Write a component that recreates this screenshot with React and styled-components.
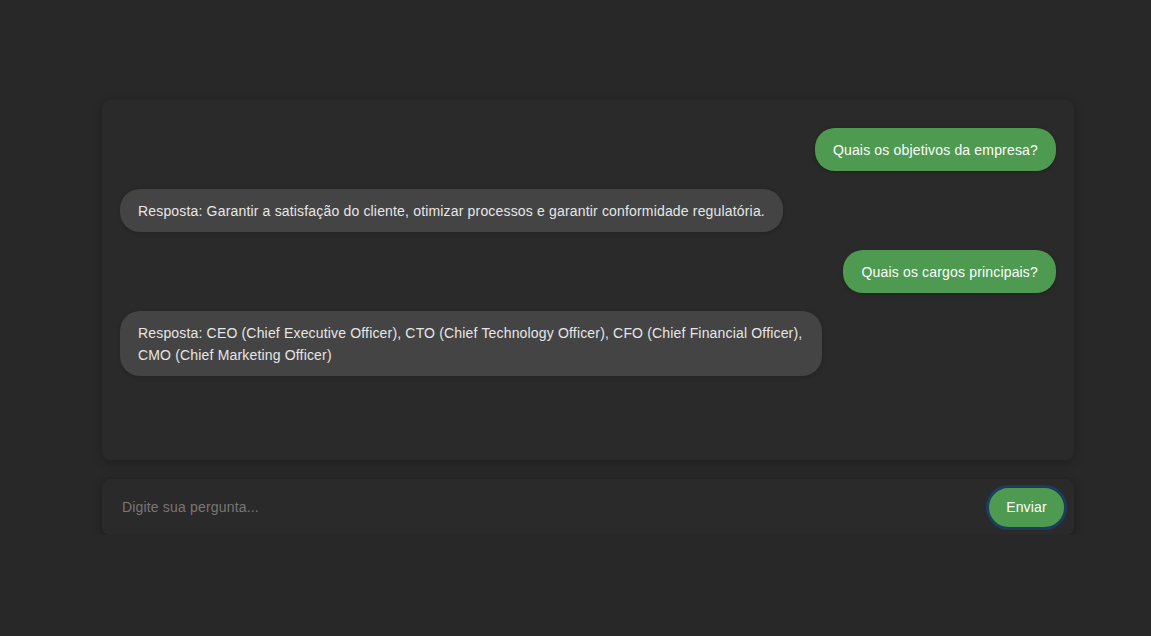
import React from 'react';
import styled, { createGlobalStyle } from 'styled-components';

const GlobalStyle = createGlobalStyle`
  * { box-sizing: border-box; }
  html, body {
    margin: 0;
    background: #282828;
    font-family: "Liberation Sans", Arial, sans-serif;
  }
`;

const Page = styled.main`
  padding: 100px 0 0 102px;
  width: 1074px;
  display: flex;
  flex-direction: column;
  gap: 19px;
`;

const ChatBox = styled.section`
  height: 360px;
  background: #2a2a2a;
  border-radius: 8px;
  box-shadow: 0 2px 10px rgba(0, 0, 0, 0.25);
  padding: 28px 18px;
  display: flex;
  flex-direction: column;
  gap: 18px;
  overflow-y: auto;
`;

const Bubble = styled.div`
  align-self: ${(p) => (p.$user ? 'flex-end' : 'flex-start')};
  max-width: 75%;
  padding: 10.5px 18px;
  border-radius: 20px;
  font-size: 14px;
  letter-spacing: 0.17px;
  line-height: 22px;
  background: ${(p) => (p.$user ? '#4e9a51' : '#444444')};
  color: ${(p) => (p.$user ? '#ffffff' : '#e6e6e6')};
  box-shadow: 0 1px 4px rgba(0, 0, 0, 0.2);
`;

const InputBar = styled.form`
  height: 56px;
  background: #2a2a2a;
  border-radius: 8px;
  box-shadow: 0 2px 10px rgba(0, 0, 0, 0.3);
  padding: 0 7px 0 20px;
  display: flex;
  align-items: center;
  gap: 10px;
`;

const Input = styled.input`
  flex: 1;
  padding: 0;
  background: transparent;
  border: none;
  outline: none;
  color: #ddd;
  font-family: inherit;
  font-size: 14px;
  letter-spacing: 0.17px;

  &::placeholder {
    color: #777777;
  }
`;

const SendButton = styled.button`
  width: 81px;
  height: 45px;
  padding: 0;
  border-radius: 23px;
  border: 3.5px solid #1d3d5e;
  background: #4e9a51;
  color: #fff;
  font-family: inherit;
  font-size: 14px;
  letter-spacing: 0.17px;
  cursor: pointer;
`;

const messages = [
  { user: true, text: 'Quais os objetivos da empresa?' },
  { user: false, text: 'Resposta: Garantir a satisfação do cliente, otimizar processos e garantir conformidade regulatória.' },
  { user: true, text: 'Quais os cargos principais?' },
  { user: false, text: 'Resposta: CEO (Chief Executive Officer), CTO (Chief Technology Officer), CFO (Chief Financial Officer), CMO (Chief Marketing Officer)' },
];

export default function App() {
  return (
    <>
      <GlobalStyle />
      <Page>
        <ChatBox>
          {messages.map((m, i) => (
            <Bubble key={i} $user={m.user}>{m.text}</Bubble>
          ))}
        </ChatBox>
        <InputBar onSubmit={(e) => e.preventDefault()}>
          <Input placeholder="Digite sua pergunta..." />
          <SendButton type="submit">Enviar</SendButton>
        </InputBar>
      </Page>
    </>
  );
}
